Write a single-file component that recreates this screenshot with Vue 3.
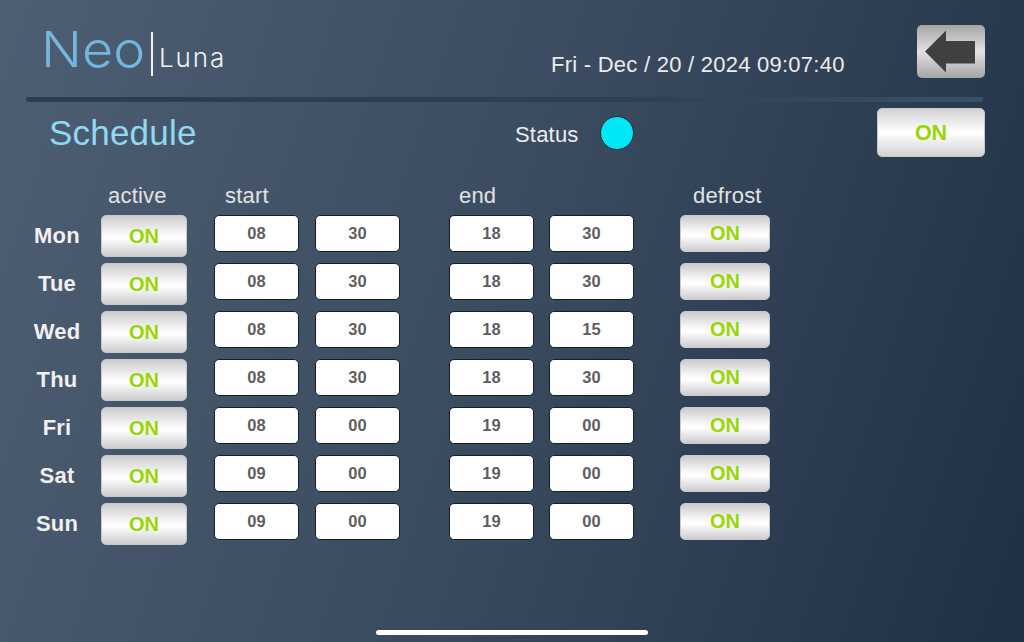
<script setup>
const rows = [
  { day: 'Mon', sh: '08', sm: '30', eh: '18', em: '30' },
  { day: 'Tue', sh: '08', sm: '30', eh: '18', em: '30' },
  { day: 'Wed', sh: '08', sm: '30', eh: '18', em: '15' },
  { day: 'Thu', sh: '08', sm: '30', eh: '18', em: '30' },
  { day: 'Fri', sh: '08', sm: '00', eh: '19', em: '00' },
  { day: 'Sat', sh: '09', sm: '00', eh: '19', em: '00' },
  { day: 'Sun', sh: '09', sm: '00', eh: '19', em: '00' },
]
</script>

<template>
  <div class="screen">
    <header class="top">
      <div class="logo">
        <span class="neo">Neo</span>
        <span class="bar"></span>
        <span class="luna">Luna</span>
      </div>
      <div class="clock">Fri - Dec / 20 / 2024 09:07:40</div>
      <button class="back" aria-label="Back">
        <svg width="52" height="44" viewBox="0 0 52 44"><path d="M0 21.5 21 0.5V11H50V33.5H21V42.5Z" fill="#404040" /></svg>
      </button>
    </header>
    <div class="rule"></div>
    <section class="title-row">
      <h1>Schedule</h1>
      <span class="status">Status</span>
      <span class="dot"></span>
      <button class="btn main-on">ON</button>
    </section>
    <div class="heads">
      <span class="h-active">active</span>
      <span class="h-start">start</span>
      <span class="h-end">end</span>
      <span class="h-defrost">defrost</span>
    </div>
    <div class="table">
      <div v-for="r in rows" :key="r.day" class="row">
        <span class="day">{{ r.day }}</span>
        <button class="btn active">ON</button>
        <span class="time t1">{{ r.sh }}</span>
        <span class="time t2">{{ r.sm }}</span>
        <span class="time t3">{{ r.eh }}</span>
        <span class="time t4">{{ r.em }}</span>
        <button class="btn defrost">ON</button>
      </div>
    </div>
    <div class="home"></div>
  </div>
</template>

<style>
html, body { margin: 0; padding: 0; }
</style>

<style scoped>
.screen {
  position: relative;
  width: 1024px;
  height: 642px;
  overflow: hidden;
  background: linear-gradient(108deg, #4e5e73 0%, #3a4b60 50%, #1f3044 100%);
  font-family: "Liberation Sans", Arial, sans-serif;
  color: #e8e8e8;
  box-sizing: border-box;
}
.top {
  display: flex;
  align-items: flex-start;
  height: 97px;
  padding: 25px 39px 0 44px;
  box-sizing: border-box;
}
.logo {
  display: flex;
  align-items: flex-start;
  width: 507px;
  height: 52px;
}
.neo {
  display: inline-block;
  width: 107px;
  margin-left: -3px;
  font-family: Inter, sans-serif;
  font-weight: 300;
  font-size: 49px;
  line-height: 50px;
  color: #74b6dd;
  transform: scaleX(1.1);
  transform-origin: left center;
}
.bar {
  width: 2px;
  height: 44px;
  margin: 7px 6px 0 3px;
  background: #f2f2f2;
}
.luna {
  font-family: Inter, sans-serif;
  font-weight: 300;
  font-size: 26px;
  line-height: 30px;
  letter-spacing: 1.9px;
  margin-top: 18px;
  color: #f2f2f2;
}
.clock {
  width: 366px;
  margin-top: 28px;
  font-size: 22px;
  line-height: 24px;
  letter-spacing: .25px;
  color: #ececec;
}
.back {
  width: 68px;
  height: 53px;
  padding: 0 0 0 8px;
  border: 0;
  border-radius: 5px;
  display: flex;
  align-items: center;
  background: linear-gradient(180deg, #a5a5a5 0%, #e2e2e2 50%, #a5a5a5 100%);
}
.rule {
  width: 957px;
  height: 5px;
  margin-left: 26px;
  border-radius: 2px;
  background: linear-gradient(90deg, #2a3d54 0%, #2c3f56 60%, #3d4f66 100%);
}
.title-row {
  display: flex;
  align-items: center;
  height: 49px;
  margin-top: 6px;
  padding-left: 49px;
}
h1 {
  width: 466px;
  margin: 0;
  font-size: 35px;
  font-weight: 400;
  letter-spacing: .2px;
  color: #90d8f3;
}
.status { width: 85px; padding-top: 5px; font-size: 22px; letter-spacing: .2px; color: #ececec; }
.dot {
  width: 32px;
  height: 32px;
  border-radius: 50%;
  background: #00e8f8;
  border: 1px solid #1d2c3c;
}
.btn {
  padding: 0;
  border: 1px solid #c8c8c8;
  border-radius: 5px;
  box-sizing: border-box;
  font-family: "Liberation Sans", Arial, sans-serif;
  font-weight: 700;
  font-size: 20px;
  color: #97d700;
  background: linear-gradient(180deg, #cbcbcb 0%, #f6f6f6 42%, #ffffff 55%, #cdcdcd 100%);
}
.main-on {
  width: 108px;
  height: 49px;
  margin-left: 243px;
  padding-top: 2px;
  font-size: 21.5px;
  background: linear-gradient(180deg, #d2d2d2 0%, #ffffff 50%, #d2d2d2 100%);
}
.heads {
  height: 24px;
  margin-top: 26px;
  font-size: 22px;
  line-height: 24px;
  letter-spacing: .2px;
  color: #e2e2e2;
  display: flex;
}
.heads span { display: block; padding-top: 1px; }
.h-active { margin-left: 108px; width: 117px; }
.h-start { width: 234px; }
.h-end { width: 234px; }
.table {
  display: flex;
  flex-direction: column;
  gap: 6px;
  margin-top: 8px;
}
.row {
  display: flex;
  align-items: flex-start;
  height: 42px;
}
.day {
  width: 101px;
  padding-left: 13px;
  box-sizing: border-box;
  text-align: center;
  font-weight: 700;
  font-size: 22px;
  line-height: 42px;
  letter-spacing: .2px;
  color: #f0f0f0;
}
.active { width: 86px; height: 42px; }
.time {
  width: 85px;
  height: 37px;
  box-sizing: border-box;
  border: 1.5px solid #141d28;
  border-radius: 5px;
  background: #fff;
  text-align: center;
  font-weight: 700;
  font-size: 16.5px;
  line-height: 34px;
  color: #5f5f5f;
}
.t1 { margin-left: 27px; }
.t2 { margin-left: 16px; }
.t3 { margin-left: 49px; }
.t4 { margin-left: 15px; }
.defrost { width: 90px; height: 37px; margin-left: 46px; }
.home {
  position: absolute;
  left: 376px;
  top: 630px;
  width: 272px;
  height: 5px;
  border-radius: 3px;
  background: #fff;
}
</style>
